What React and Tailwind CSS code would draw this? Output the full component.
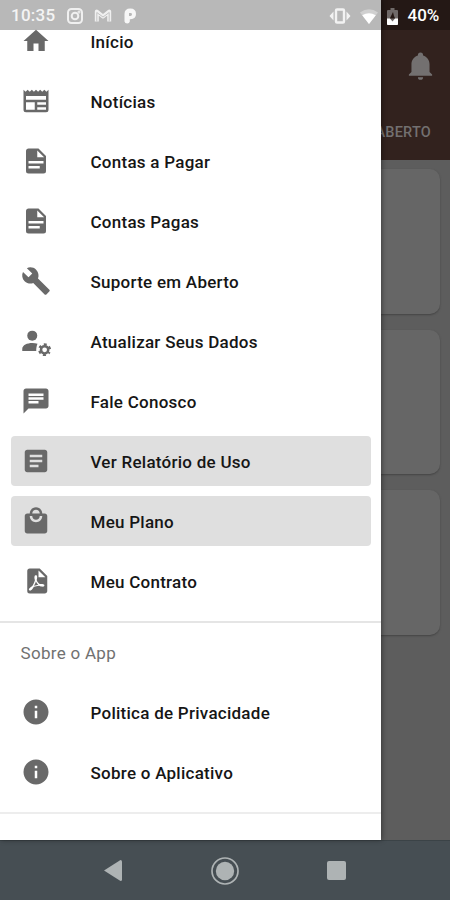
import React from 'react';

const paths = {
  home: 'M10 20v-6h4v6h5v-8h3L12 3 2 12h3v8z',
  news: 'M2 3l1.67 1.67L5.33 3 7 4.67 8.67 3l1.66 1.67L12 3l1.67 1.67L15.33 3 17 4.67 18.67 3l1.66 1.67L22 3v16a2 2 0 0 1-2 2H4a2 2 0 0 1-2-2V3m9 16v-6H4v6h7m9 0v-2h-7v2h7m0-4v-2h-7v2h7m0-4V8H4v3h16z',
  file: 'M13 9h5.5L13 3.5V9M6 2h8l6 6v12a2 2 0 0 1-2 2H6a2 2 0 0 1-2-2V4c0-1.11.89-2 2-2m9 16v-2H6v2h9m3-4v-2H6v2h12z',
  wrench: 'M22.7 19l-9.1-9.1c.9-2.3.4-5-1.5-6.9-2-2-5-2.4-7.4-1.3L9 6 6 9 1.6 4.7C.4 7.1.9 10.1 2.9 12.1c1.9 1.9 4.6 2.4 6.9 1.5l9.1 9.1c.4.4 1 .4 1.4 0l2.3-2.3c.5-.4.5-1.1.1-1.4z',
  message: 'M20 2H4c-1.1 0-2 .9-2 2v18l4-4h14c1.1 0 2-.9 2-2V4c0-1.1-.9-2-2-2zM6 9h12v2H6V9zm8 5H6v-2h8v2zm4-6H6V6h12v2z',
  article: 'M19 3H5c-1.1 0-2 .9-2 2v14c0 1.1.9 2 2 2h14c1.1 0 2-.9 2-2V5c0-1.1-.9-2-2-2zm-5 14H7v-2h7v2zm3-4H7v-2h10v2zm0-4H7V7h10v2z',
  bag: 'M19 6h-2c0-2.76-2.24-5-5-5S7 3.24 7 6H5c-1.1 0-2 .9-2 2v12c0 1.1.9 2 2 2h14c1.1 0 2-.9 2-2V8c0-1.1-.9-2-2-2zm-7-3c1.66 0 3 1.34 3 3H9c0-1.66 1.34-3 3-3zm0 10c-2.76 0-5-2.24-5-5h2c0 1.66 1.34 3 3 3s3-1.34 3-3h2c0 2.76-2.24 5-5 5z',
  pdf: 'M14 9h5.5L14 3.5V9M7 2h8l6 6v12c0 1.1-.9 2-2 2H7a2 2 0 0 1-2-2V4a2 2 0 0 1 2-2m4.93 10.44c.41.9.93 1.64 1.53 2.15l.41.32c-.87.16-2.07.44-3.34.93l-.11.04.5-1.04c.45-.87.78-1.66 1.01-2.4m6.48 3.81c.18-.18.27-.41.28-.66.03-.2-.02-.39-.12-.55-.29-.47-1.04-.69-2.28-.69l-1.29.07-.87-.58c-.63-.52-1.2-1.43-1.6-2.56l.04-.14c.33-1.33.64-2.94-.02-3.6a.853.853 0 0 0-.61-.24h-.24c-.37 0-.7.39-.79.77-.37 1.33-.15 2.06.22 3.27v.01c-.25.88-.57 1.9-1.08 2.93l-.96 1.8-.89.49c-1.2.75-1.77 1.59-1.88 2.12-.04.19-.02.36.05.54l.03.05.48.31.44.11c.81 0 1.73-.95 2.97-3.07l.18-.07c1.03-.33 2.31-.56 4.03-.75 1.03.51 2.24.74 3 .74.44 0 .74-.11.91-.3z',
  info: 'M12 2C6.48 2 2 6.48 2 12s4.48 10 10 10 10-4.48 10-10S17.52 2 12 2zm1 15h-2v-6h2v6zm0-8h-2V7h2v2z',
  bell: 'M21 19v1H3v-1l2-2v-6c0-3.1 2.03-5.83 5-6.71V4a2 2 0 0 1 4 0v.29c2.97.88 5 3.61 5 6.71v6l2 2m-7 2a2 2 0 0 1-4 0',
};

const Icon = ({ name, className }) => (
  <svg viewBox="0 0 24 24" fill="currentColor" className={className}>
    {name === 'account' ? (
      <>
        <circle cx="9" cy="7.7" r="4" />
        <path d="M13.2 14.1C12 13.7 10.5 13.6 9 13.6c-4 0-8 1.7-8 4.7V20h11.200c-.1-2 .2-4 1-5.900z" />
        <circle cx="18.9" cy="19" r="2.9" fill="none" stroke="currentColor" strokeWidth="2" />
        <circle cx="18.9" cy="19" r="4.2" fill="none" stroke="currentColor" strokeWidth="1.9" strokeDasharray="2.2 2.198" strokeDashoffset="1.1" transform="rotate(30 18.9 19)" />
      </>
    ) : (
      <path d={paths[name]} />
    )}
  </svg>
);

const items = [
  { icon: 'home', label: 'Início' },
  { icon: 'news', label: 'Notícias' },
  { icon: 'file', label: 'Contas a Pagar' },
  { icon: 'file', label: 'Contas Pagas' },
  { icon: 'wrench', label: 'Suporte em Aberto' },
  { icon: 'account', label: 'Atualizar Seus Dados' },
  { icon: 'message', label: 'Fale Conosco' },
  { icon: 'article', label: 'Ver Relatório de Uso', active: true },
  { icon: 'bag', label: 'Meu Plano', active: true },
  { icon: 'pdf', label: 'Meu Contrato' },
];

const about = [
  { icon: 'info', label: 'Politica de Privacidade' },
  { icon: 'info', label: 'Sobre o Aplicativo' },
];

const MenuItem = ({ icon, label, active }) => (
  <div className={`flex h-[50px] shrink-0 items-center rounded-[4px] pl-[9.5px] ${active ? 'bg-[#dfdfdf]' : ''}`}>
    <Icon name={icon} className="size-[30px] text-[#696969]" />
    <span className="ml-[40px] pt-[3px] text-[17px] font-medium tracking-[0.26px] whitespace-nowrap text-[#161616]">{label}</span>
  </div>
);

const StatusBar = () => (
  <div className="absolute inset-x-0 top-0 flex h-[30px] items-center bg-black/28 pt-[2px] text-[17px] font-medium text-white">
    <span className="ml-[11px] w-[56px] shrink-0 tracking-[0.25px] text-[#f4f4f4]">10:35</span>
    <svg viewBox="0 0 16 16" className="size-4 text-[#f0f0f0]" fill="none" stroke="currentColor" strokeWidth="2">
      <rect x="1" y="1" width="14" height="14" rx="3.5" />
      <circle cx="8" cy="8" r="3.3" />
      <circle cx="12" cy="4" r=".5" />
    </svg>
    <svg viewBox="0 0 18 14" className="ml-[11px] h-[14px] w-[18px]" fill="none">
      <path d="M2.800 12.500V2.500L9 7.500l6.200-5v10" stroke="#f0f0f0" strokeWidth="4" strokeLinejoin="round" />
      <path d="M2.800 12.500V3.500L9 8l6.200-4.500v9" stroke="#c4c4c4" strokeWidth="1" />
    </svg>
    <svg viewBox="0 0 14 16" className="ml-[11px] h-4 w-[14px]">
      <path fillRule="evenodd" d="M1.500 6Q1.500.5 7.300.5 13 .5 13 6q0 5-5.500 5.200H6.800V13.500q-.3 2-2.600 2T1.500 13.500zM6 5v3h1.500Q9 8 9 6.300 9 5 7.500 5z" fill="#f7f7f7" />
    </svg>
    <svg viewBox="0 0 22 16" className="ml-[192px] h-4 w-[22px] text-[#f2f2f2]" fill="none" stroke="currentColor">
      <rect x="7" y="1.5" width="8" height="13" rx="1" strokeWidth="2.4" />
      <path d="M4.500 3.500v9L.5 8zM17.500 3.500v9L21.500 8z" fill="currentColor" stroke="none" />
    </svg>
    <svg viewBox="0 0 18 15" className="ml-[9px] h-[15px] w-[18px]">
      <path d="M9 15L0 3.500Q9-3 18 3.500z" fill="#d0d0d0" />
      <path d="M9 15L2.200 6.200Q9 2.500 15.800 6.200z" fill="#ffffff" />
    </svg>
    <svg viewBox="0 0 11 17" className="ml-[9px] h-[17px] w-[11px]">
      <path d="M3.500 0h4v2H10q1 0 1 1v14H0V3q0-1 1-1h2.500z" fill="#706a69" />
      <path d="M6 4L2.800 10.500h5.400L7 8z" fill="#251814" />
      <path d="M0 10.500h3l2.500 3 2.500-3h3V16q0 1-1 1H1q-1 0-1-1z" fill="#ffffff" />
    </svg>
    <span className="ml-[9.5px]">40%</span>
  </div>
);

const App = () => {
  return (
    <div className="relative flex h-[900px] w-[450px] flex-col overflow-hidden bg-[#5d5d5d] font-['Roboto',sans-serif]">
      {/* Dimmed page behind the drawer */}
      <div className="flex h-[160px] shrink-0 flex-col items-end bg-[#32221e] text-[#737070]">
        <Icon name="bell" className="mt-[50px] mr-[14px] size-[31px]" />
        <span className="mt-[41px] mr-[19px] pt-px text-[14.5px] leading-5 font-medium tracking-[0.2px]">EM ABERTO</span>
      </div>
      <div className="flex flex-1 flex-col gap-[16px] pt-[9px] pr-[10px] pl-[10px]">
        {[1, 2, 3].map((n) => (
          <div key={n} className="h-[144.5px] shrink-0 rounded-[10px] bg-[#666666] shadow-[0_1px_2px_#444444]" />
        ))}
      </div>

      {/* Drawer */}
      <div className="absolute top-0 left-0 flex h-[840px] w-[380.5px] flex-col bg-white pt-[16px] shadow-[1px_0_5px_rgba(0,0,0,0.4)]">
        <div className="flex flex-col gap-[10px] pr-[10px] pl-[11px]">
          {items.map((item) => (
            <MenuItem key={item.label} {...item} />
          ))}
        </div>
        <div className="mt-[15px] h-[2px] shrink-0 bg-[#e5e5e5]" />
        <h2 className="mt-[18px] ml-[20.5px] h-6 text-[17px] leading-6 font-normal tracking-[0.3px] text-[#717171]">Sobre o App</h2>
        <div className="mt-[22px] flex flex-col gap-[10px] pr-[10px] pl-[11px]">
          {about.map((item) => (
            <MenuItem key={item.label} {...item} />
          ))}
        </div>
        <div className="mt-[15px] h-[2px] shrink-0 bg-[#ededed]" />
      </div>

      <StatusBar />

      {/* Navigation bar */}
      <div className="flex h-[60px] shrink-0 items-center border-t border-[#3b4347] bg-[#464e53] text-[#aeb3b4]">
        <svg viewBox="0 0 18 21" className="ml-[104px] h-[21px] w-[18px]" fill="currentColor">
          <path d="M0 10.500L16.500 0Q18 0 18 1.500v18q0 1.500-1.500 1.500z" />
        </svg>
        <svg viewBox="0 0 28 28" className="ml-[89px] size-7">
          <circle cx="14" cy="14" r="13" fill="none" stroke="currentColor" strokeWidth="1.7" />
          <circle cx="14" cy="14" r="9.2" fill="currentColor" />
        </svg>
        <div className="ml-[88px] size-[19px] rounded-[2px] bg-[#aeb3b4]" />
      </div>
    </div>
  );
};

export default App;
